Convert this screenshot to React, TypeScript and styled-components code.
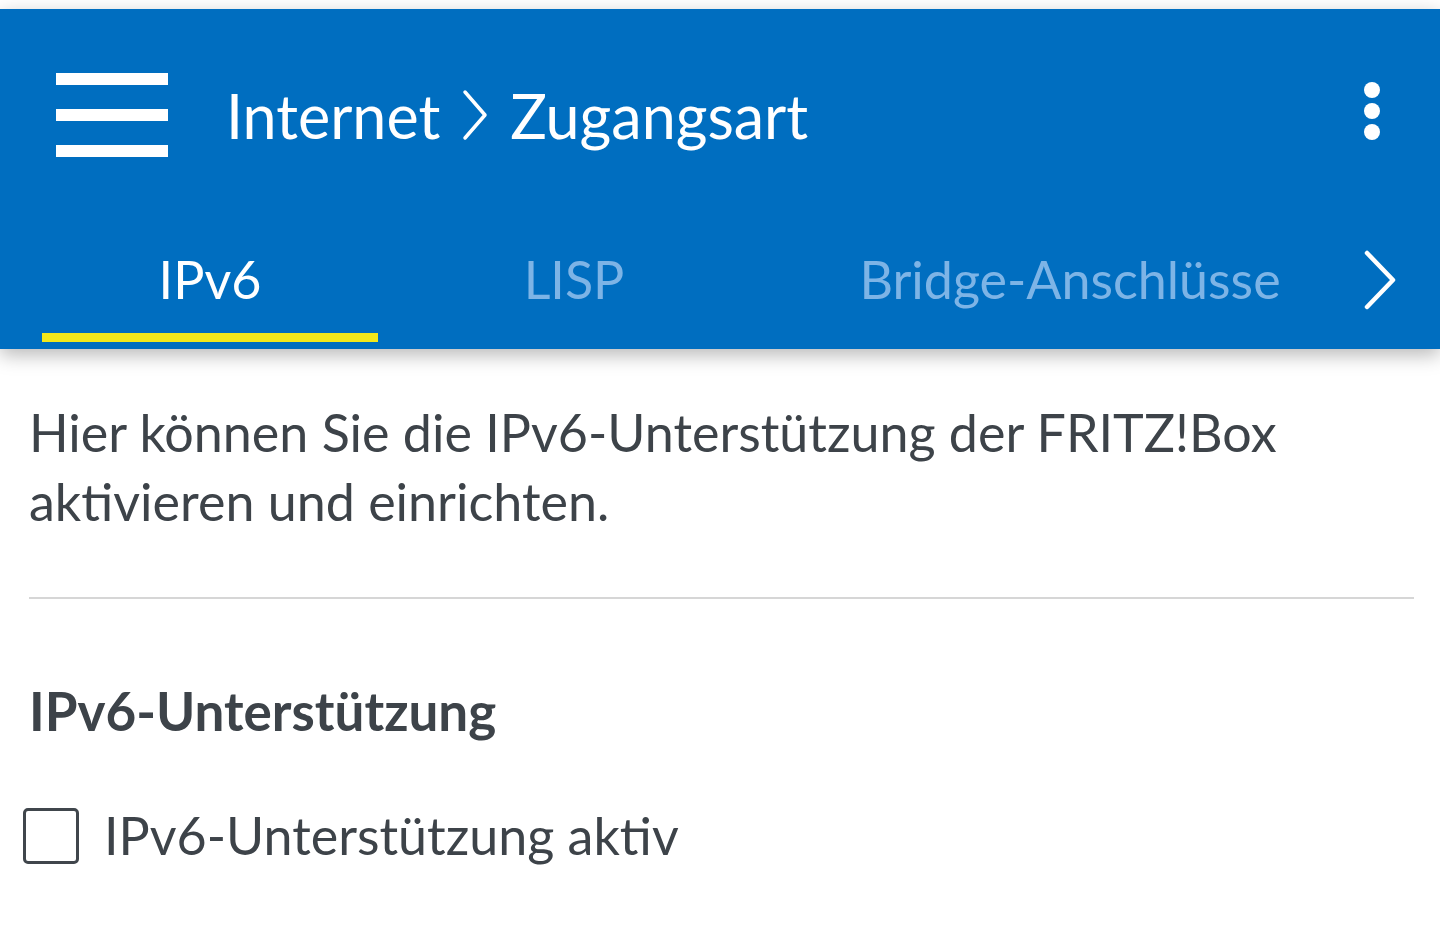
import React from 'react'
import styled, { createGlobalStyle } from 'styled-components'

const GlobalStyle = createGlobalStyle`
  html, body {
    margin: 0;
    padding: 0;
    background: #ffffff;
  }
  body {
    font-family: Lato, 'Open Sans', sans-serif;
    color: #3d4349;
  }
`

const Page = styled.div`
  padding-top: 9px;
  width: 1440px;
  min-height: 937px;
  background: #ffffff;
`

const AppBar = styled.header`
  position: relative;
  z-index: 1;
  height: 340px;
  background: #006ec0;
  box-shadow: 0 6px 18px rgba(0, 0, 0, 0.28);
  display: flex;
  flex-direction: column;
`

const Toolbar = styled.div`
  height: 212px;
  display: flex;
  align-items: center;
  padding: 0 60px 0 56px;
`

const MenuButton = styled.button`
  width: 112px;
  height: 84px;
  padding: 0;
  border: none;
  background: transparent;
  display: flex;
  flex-direction: column;
  justify-content: space-between;
  cursor: pointer;
`

const MenuBar = styled.span`
  display: block;
  width: 112px;
  height: 12px;
  background: #ffffff;
`

const Title = styled.h1`
  margin: 0 0 0 58px;
  flex: 1;
  display: flex;
  align-items: center;
  gap: 22px;
  font-size: 61px;
  font-weight: 400;
  color: #ffffff;
`

const MoreButton = styled.button`
  width: 16px;
  padding: 0;
  margin-top: -8px;
  border: none;
  background: transparent;
  display: flex;
  flex-direction: column;
  gap: 5px;
  cursor: pointer;
`

const Dot = styled.span`
  display: block;
  width: 16px;
  height: 16px;
  border-radius: 50%;
  background: #ffffff;
`

const TabRow = styled.nav`
  flex: 1;
  display: flex;
  padding-left: 42px;
`

const Tab = styled.div<{ $width: number; $active?: boolean }>`
  position: relative;
  flex-shrink: 0;
  width: ${(p) => p.$width}px;
  display: flex;
  align-items: center;
  justify-content: center;
  padding-bottom: 12px;
  font-size: 52px;
  color: ${(p) => (p.$active ? '#ffffff' : '#7db4e6')};

  &::after {
    content: '';
    position: absolute;
    left: 0;
    right: 0;
    bottom: 7px;
    height: 9px;
    background: ${(p) => (p.$active ? '#f2e81c' : 'transparent')};
  }
`

const ScrollButton = styled.button`
  flex-shrink: 0;
  margin-left: -10px;
  width: 40px;
  padding: 0 0 10px;
  border: none;
  background: transparent;
  display: flex;
  align-items: center;
  justify-content: center;
`

const Content = styled.main`
  padding: 49px 26px 0 29px;
`

const Intro = styled.p`
  margin: 0;
  font-size: 52px;
  line-height: 69px;
`

const Divider = styled.hr`
  margin: 61px 0 0;
  border: none;
  height: 2px;
  background: #d6d6d6;
`

const SectionTitle = styled.h2`
  margin: 80px 0 0;
  font-size: 53px;
  font-weight: 700;
  line-height: 64px;
`

const CheckRow = styled.label`
  margin: 58px 0 0 -6px;
  display: flex;
  align-items: center;
  gap: 25px;
  font-size: 52px;
  line-height: 69px;
`

const Box = styled.span`
  width: 50px;
  height: 50px;
  border: 3px solid #40464c;
  border-radius: 5px;
  flex-shrink: 0;
`

export default function App() {
  return (
    <Page>
      <GlobalStyle />
      <AppBar>
        <Toolbar>
          <MenuButton aria-label="Menü">
            <MenuBar />
            <MenuBar />
            <MenuBar />
          </MenuButton>
          <Title>
            <span>Internet</span>
            <svg width="26" height="52" viewBox="0 0 26 52" fill="none">
              <path d="M3 3 L23 26 L3 49" stroke="#ffffff" strokeWidth="3.5" strokeLinecap="round" strokeLinejoin="round" />
            </svg>
            <span>Zugangsart</span>
          </Title>
          <MoreButton aria-label="Mehr">
            <Dot />
            <Dot />
            <Dot />
          </MoreButton>
        </Toolbar>
        <TabRow>
          <Tab $width={336} $active>IPv6</Tab>
          <Tab $width={392}>LISP</Tab>
          <Tab $width={600}>Bridge-Anschlüsse</Tab>
          <ScrollButton aria-label="Weiter">
            <svg width="34" height="62" viewBox="0 0 34 62" fill="none">
              <path d="M4 4 L30 31 L4 58" stroke="#ffffff" strokeWidth="4.5" strokeLinecap="round" strokeLinejoin="round" />
            </svg>
          </ScrollButton>
        </TabRow>
      </AppBar>
      <Content>
        <Intro>Hier können Sie die IPv6-Unterstützung der FRITZ!Box aktivieren und einrichten.</Intro>
        <Divider />
        <SectionTitle>IPv6-Unterstützung</SectionTitle>
        <CheckRow>
          <Box />
          IPv6-Unterstützung aktiv
        </CheckRow>
      </Content>
    </Page>
  )
}
